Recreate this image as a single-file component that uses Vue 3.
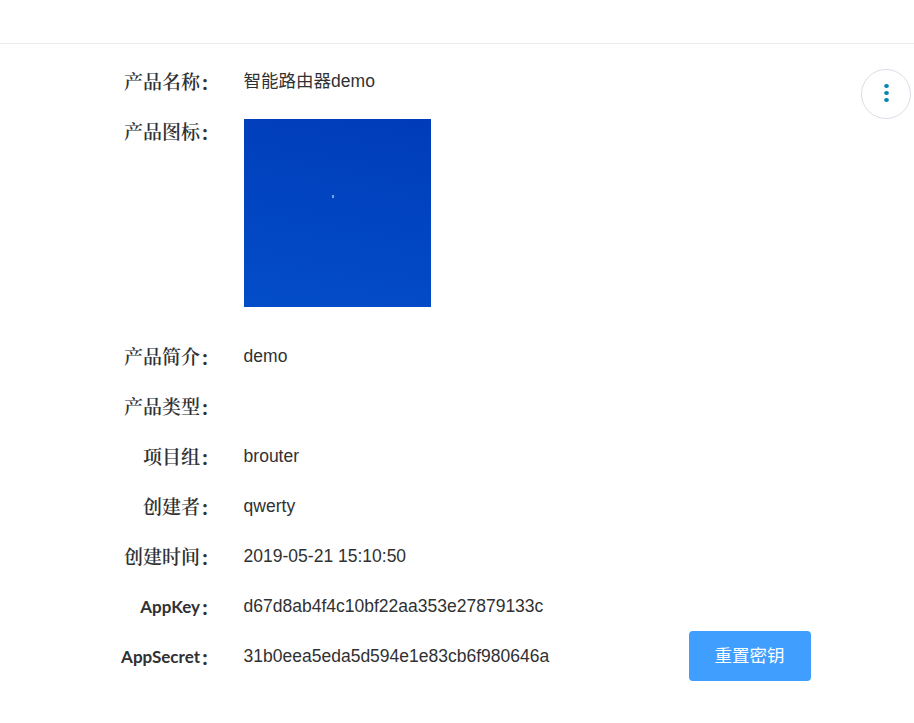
<script setup>
const rows = [
  { label: '产品名称', value: '智能路由器demo' },
  { label: '产品图标', picture: true },
  { label: '产品简介', value: 'demo' },
  { label: '产品类型', value: '' },
  { label: '项目组', value: 'brouter' },
  { label: '创建者', value: 'qwerty' },
  { label: '创建时间', value: '2019-05-21 15:10:50' },
  { label: 'AppKey', latin: true, value: 'd67d8ab4f4c10bf22aa353e27879133c' },
  { label: 'AppSecret', latin: true, value: '31b0eea5eda5d594e1e83cb6f980646a', reset: true },
]
</script>

<template>
  <div class="page">
    <header class="topbar"></header>
    <main class="content">
      <dl class="details">
        <div v-for="row in rows" :key="row.label" class="row" :class="{ tall: row.picture }">
          <dt class="label"><span :class="{ latin: row.latin }">{{ row.label }}</span><span class="colon">：</span></dt>
          <dd class="value">
            <div v-if="row.picture" class="picture">
              <svg width="187" height="188" viewBox="0 0 187 188">
                <rect x="88" y="76" width="2" height="3" fill="#6fa4ee" />
              </svg>
            </div>
            <span v-else class="text">{{ row.value }}</span>
          </dd>
          <button v-if="row.reset" class="reset" type="button">重置密钥</button>
        </div>
      </dl>
      <button class="more" type="button" aria-label="更多">
        <svg width="6" height="20" viewBox="0 0 6 20" fill="#0682b5">
          <ellipse cx="3.5" cy="2.1" rx="2.4" ry="2" />
          <ellipse cx="3.5" cy="9.1" rx="2.4" ry="2" />
          <ellipse cx="3.5" cy="16.1" rx="2.4" ry="2" />
        </svg>
      </button>
    </main>
  </div>
</template>

<style>
body {
  background: #fff;
}
</style>

<style scoped>
.page {
  box-sizing: border-box;
  height: 723px;
  overflow: hidden;
  color: #303133;
  font-family: "Liberation Sans", "Noto Sans CJK SC", sans-serif;
}
.topbar {
  box-sizing: border-box;
  height: 44px;
  border-bottom: 1px solid #ebebee;
}
.content {
  display: flex;
  align-items: flex-start;
  justify-content: space-between;
  padding: 12px 3px 0 0;
}
.details {
  width: 811px;
  margin: 0;
}
.row {
  display: flex;
  height: 50px;
}
.row.tall {
  height: 225px;
}
.label {
  display: flex;
  justify-content: flex-end;
  width: 218.6px;
  height: 50px;
  font-family: "Noto Serif CJK SC", "Noto Sans CJK SC", serif;
  font-size: 19px;
  font-weight: 600;
  line-height: 49px;
  white-space: nowrap;
}
.latin {
  font-family: Lato, sans-serif;
  font-size: 17px;
  font-weight: 700;
  line-height: 51px;
}
.colon {
  font-size: 18.6px;
  font-weight: 700;
  line-height: 52px;
}
.value {
  flex: 1;
  margin: 0 0 0 25px;
  font-size: 17.5px;
  line-height: 50px;
  white-space: nowrap;
}
.picture {
  width: 187px;
  height: 188px;
  margin: 13px 0 0 0.4px;
  background: linear-gradient(190deg, #003cb9, #034dc9);
}
.picture svg {
  display: block;
}
.reset {
  width: 122px;
  height: 50px;
  padding: 0 1px 0 0;
  border: 0;
  border-radius: 4px;
  background: #409eff;
  color: #fff;
  font: 17.5px/50px "Liberation Sans", "Noto Sans CJK SC", sans-serif;
}
.more {
  display: flex;
  box-sizing: border-box;
  align-items: center;
  justify-content: center;
  width: 50px;
  height: 50px;
  margin-top: 13px;
  padding: 0;
  border: 1px solid #dcdce6;
  border-radius: 50%;
  background: #fff;
}
</style>
